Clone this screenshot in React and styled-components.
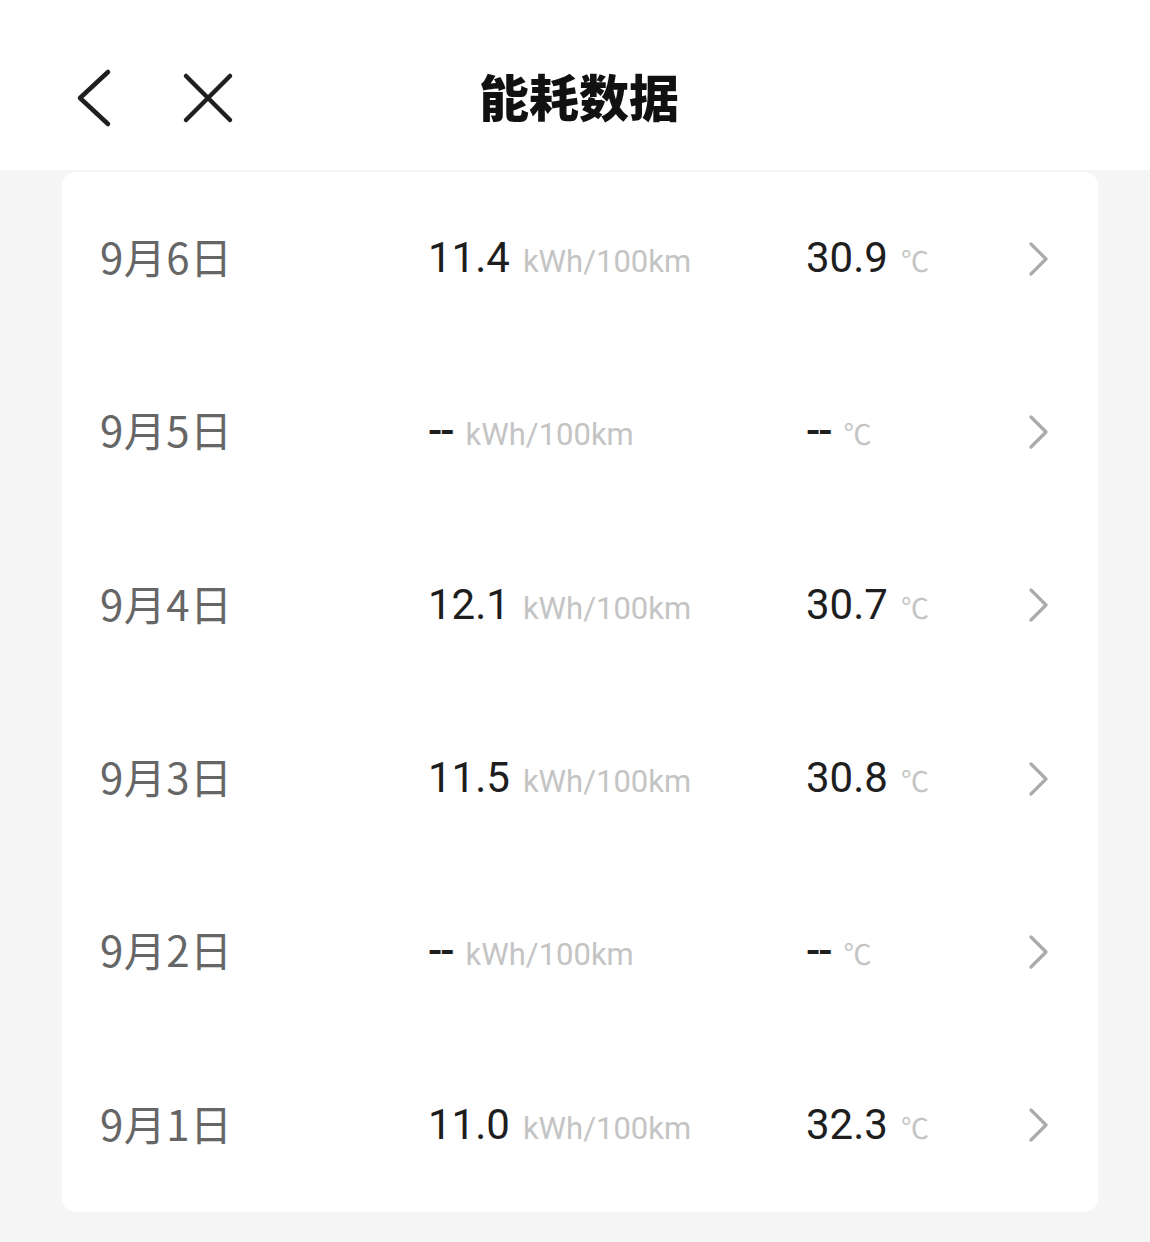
import React from "react";
import styled, { createGlobalStyle } from "styled-components";

const GlobalStyle = createGlobalStyle`
  html, body {
    margin: 0;
    padding: 0;
    background: #f5f5f5;
  }
  body {
    font-family: Roboto, "Noto Sans CJK SC", sans-serif;
  }
`;

const records = [
  { date: "9月6日", energy: "11.4", temp: "30.9" },
  { date: "9月5日", energy: null, temp: null },
  { date: "9月4日", energy: "12.1", temp: "30.7" },
  { date: "9月3日", energy: "11.5", temp: "30.8" },
  { date: "9月2日", energy: null, temp: null },
  { date: "9月1日", energy: "11.0", temp: "32.3" },
];

const BackIcon = () => (
  <svg width="40" height="60" viewBox="0 0 40 60" fill="none">
    <path d="M34 4 L6 30 L34 56" stroke="#1f1f1f" strokeWidth="4.5" strokeLinecap="round" strokeLinejoin="round" />
  </svg>
);

const CloseIcon = () => (
  <svg width="52" height="52" viewBox="0 0 52 52" fill="none">
    <path d="M4 4 L48 48 M48 4 L4 48" stroke="#1f1f1f" strokeWidth="4.5" strokeLinecap="round" />
  </svg>
);

const ChevronIcon = () => (
  <svg width="22" height="34" viewBox="0 0 22 34" fill="none">
    <path d="M3 2 L18 17 L3 32" stroke="#ababab" strokeWidth="3.2" strokeLinecap="round" strokeLinejoin="round" />
  </svg>
);

const App = () => {
  return (
    <Page>
      <GlobalStyle />
      <Header>
        <NavButtons>
          <IconButton>
            <BackIcon />
          </IconButton>
          <IconButton>
            <CloseIcon />
          </IconButton>
        </NavButtons>
        <Title>能耗数据</Title>
      </Header>
      <Content>
        <Card>
          {records.map((r) => (
            <Row key={r.date}>
              <DateCell>{r.date}</DateCell>
              <ValueCell $width="378px">
                <Value $empty={!r.energy}>{r.energy || "--"}</Value>
                <Unit>kWh/100km</Unit>
              </ValueCell>
              <ValueCell>
                <Value $empty={!r.temp}>{r.temp || "--"}</Value>
                <Unit $cjk>℃</Unit>
              </ValueCell>
              <Arrow>
                <ChevronIcon />
              </Arrow>
            </Row>
          ))}
        </Card>
      </Content>
    </Page>
  );
};

const Page = styled.div`
  width: 1150px;
  min-height: 1242px;
  background: #f5f5f5;
`;

const Header = styled.header`
  position: relative;
  height: 170px;
  background: #ffffff;
  display: flex;
  align-items: center;
  justify-content: center;
`;

const NavButtons = styled.div`
  position: absolute;
  left: 74px;
  top: 0;
  height: 100%;
  display: flex;
  align-items: center;
  gap: 68px;
  padding-top: 26px;
  box-sizing: border-box;
`;

const IconButton = styled.button`
  border: none;
  background: none;
  padding: 0;
  display: flex;
  align-items: center;
  cursor: pointer;
`;

const Title = styled.h1`
  margin: 0;
  padding: 20px 0 0 8px;
  font-family: "Noto Sans CJK SC", sans-serif;
  font-size: 50px;
  font-weight: 900;
  color: #111;
`;

const Content = styled.main`
  padding: 2px 52px 30px 62px;
`;

const Card = styled.section`
  background: #ffffff;
  border-radius: 14px;
  display: flex;
  flex-direction: column;
`;

const Row = styled.div`
  height: 173.33px;
  display: flex;
  align-items: center;
  padding: 0 48px 0 38px;
`;

const DateCell = styled.div`
  width: 328px;
  flex-shrink: 0;
  margin-top: -6px;
  font-family: "Noto Sans CJK SC", sans-serif;
  font-size: 42px;
  letter-spacing: 0.5px;
  color: #666666;
`;

const ValueCell = styled.div`
  width: ${({ $width }) => $width || "auto"};
  flex: ${({ $width }) => ($width ? "0 0 auto" : "1")};
  display: flex;
  align-items: baseline;
  margin-top: -2px;
`;

const Value = styled.span`
  font-family: Roboto, sans-serif;
  font-size: 42px;
  color: #1e1e1e;
  font-weight: ${({ $empty }) => ($empty ? 500 : 400)};
  letter-spacing: ${({ $empty }) => ($empty ? "-2px" : "0")};
`;

const Unit = styled.span`
  margin-left: 13px;
  font-family: ${({ $cjk }) => ($cjk ? '"Noto Sans CJK SC", sans-serif' : "Roboto, sans-serif")};
  font-size: ${({ $cjk }) => ($cjk ? "28px" : "31px")};
  color: #c4c4c4;
`;

const Arrow = styled.div`
  display: flex;
  align-items: center;
`;

export default App;
